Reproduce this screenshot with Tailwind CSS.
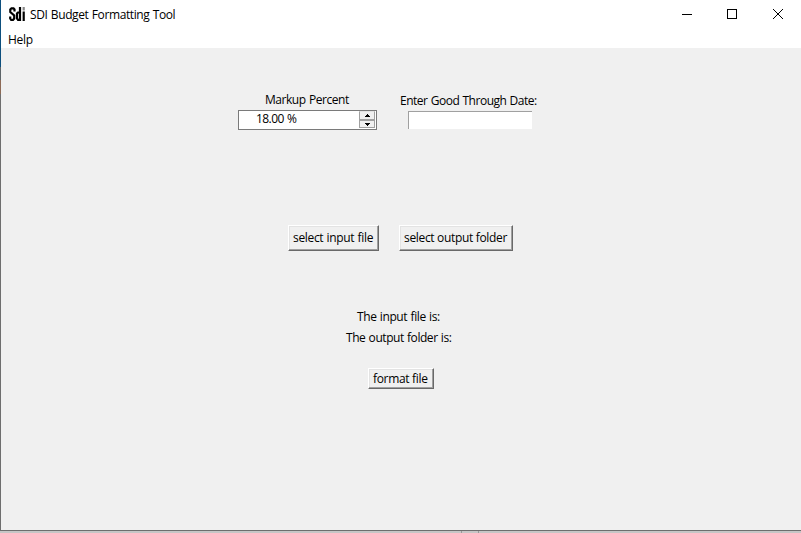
<!DOCTYPE html>
<html lang="en">
<head>
<meta charset="utf-8">
<title>SDI Budget Formatting Tool</title>
<script src="https://cdn.jsdelivr.net/npm/@tailwindcss/browser@4"></script>
</head>
<body class="w-[801px] h-[533px] overflow-hidden flex flex-col bg-[#c8c8c8] text-black text-[12px] leading-[16px] tracking-[-0.45px] [word-spacing:0.6px] whitespace-nowrap font-['Open_Sans','Noto_Sans',sans-serif]">
<div class="flex h-[530px]">
  <div class="w-px shrink-0 flex flex-col">
    <div class="h-[67px] bg-[#0d4f7d]"></div>
    <div class="h-[13px] bg-[#5d6468]"></div>
    <div class="h-[14px] bg-[#8d6a56]"></div>
    <div class="grow bg-[#6e6e6e]"></div>
  </div>
  <div class="w-[800px] flex flex-col bg-[#f0f0f0]">
    <header class="h-[30px] bg-white flex">
      <svg class="ml-[8px] mt-[7px] w-[16px] h-[15px] shrink-0" viewBox="0 0 16 15" fill="none" stroke="#000" stroke-width="2.200">
        <path d="M5.500 4.500V2.500L4.500 1.300H2.500L1.300 2.500V5L5.200 8.500V11.500L4 13H2.200L1.200 11.500V9.500"/>
        <path d="M11 0V14M10.500 5.500H9L8 6.500V11.500L9 12.800H10.500M14.700 4.500V14"/>
        <path d="M14.700 0V3.500" stroke="#888"/>
      </svg>
      <span class="ml-[5px] mt-[7px] w-[634px] tracking-[-0.39px]">SDI Budget Formatting Tool</span>
      <div class="flex">
        <svg class="w-[46px] h-[30px]" viewBox="0 0 46 30" shape-rendering="crispEdges"><path fill="#000" d="M18 14h10v1H18z"/></svg>
        <svg class="w-[46px] h-[30px]" viewBox="0 0 46 30" shape-rendering="crispEdges" fill="none" stroke="#000"><path d="M17.500 9.500h9v9h-9z"/></svg>
        <svg class="w-[45px] h-[30px]" viewBox="0 0 45 30" fill="none" stroke="#000"><path d="M17 9l10 10M27 9l-10 10"/></svg>
      </div>
    </header>
    <nav class="h-[18px] bg-white pl-[7px] pt-[2px] tracking-[-0.3px]"><div>Help</div></nav>
    <main class="grow flex flex-col">
      <div class="flex pt-[44px] pl-[237px]">
        <div class="w-[139px]">
          <div class="pl-[27px] h-[18px]">Markup Percent</div>
          <div class="h-[20px] w-[139px] bg-white border border-[#7a7a7a] flex justify-between">
            <span class="pl-[17px] leading-[16px] tracking-[-0.55px]">18.00 %</span>
            <div class="w-[17px] flex flex-col">
              <div class="w-[16px] h-[9px] bg-[#f0f0f0] border border-t-[#e3e3e3] border-l-[#a0a0a0] border-r-[#a0a0a0] border-b-[#a0a0a0] flex justify-center items-center"><svg class="w-[5px] h-[3px]" viewBox="0 0 5 3" shape-rendering="crispEdges"><path d="M2 0h1v1h1v1h1v1H0V2h1V1h1z"/></svg></div>
              <div class="w-[16px] h-[8px] bg-[#f0f0f0] border border-[#a0a0a0] flex justify-center items-center"><svg class="w-[5px] h-[3px]" viewBox="0 0 5 3" shape-rendering="crispEdges"><path d="M0 0h5v1H4v1H3v1H2V2H1V1H0z"/></svg></div>
            </div>
          </div>
        </div>
        <div class="ml-[23px] pt-px">
          <div class="h-[18px] tracking-[-0.49px]">Enter Good Through Date:</div>
          <div class="ml-[8px] w-[124px] h-[18px] bg-white border-t border-l border-[#a0a0a0]"></div>
        </div>
      </div>
      <div class="mt-[95px] pl-[287px] flex gap-[20px] tracking-[-0.33px]">
        <button class="w-[91px] h-[26px] border-t border-l border-t-white border-l-white border-r border-b border-r-[#696969] border-b-[#696969] shadow-[inset_-1px_-1px_0_#a0a0a0,inset_1px_1px_0_#e3e3e3] pl-[4px] text-left"><span class="block leading-[24px] [word-spacing:0.5px]">select input file</span></button>
        <button class="w-[114px] h-[26px] border-t border-l border-t-white border-l-white border-r border-b border-r-[#696969] border-b-[#696969] shadow-[inset_-1px_-1px_0_#a0a0a0,inset_1px_1px_0_#e3e3e3] pl-[4px] text-left"><span class="block leading-[24px]">select output folder</span></button>
      </div>
      <div class="mt-[58px] pl-[356px] tracking-[-0.4px]">The input file is:</div>
      <div class="mt-[5px] pl-[345px]">The output folder is:</div>
      <div class="mt-[22px] pl-[367px] flex tracking-[-0.33px]">
        <button class="w-[66px] h-[21px] border-t border-l border-t-white border-l-white border-r border-b border-r-[#696969] border-b-[#696969] shadow-[inset_-1px_-1px_0_#a0a0a0,inset_1px_1px_0_#e3e3e3] pl-[4px] text-left"><span class="block leading-[20px]">format file</span></button>
      </div>
    </main>
  </div>
</div>
<div class="h-px shrink-0 bg-[#6e6e6e]"></div>
<div class="h-[2px] shrink-0 flex bg-[#c6c6c6]">
  <div class="ml-[461px] w-px bg-[#999]"></div><div class="ml-[16px] w-px bg-[#999]"></div>
</div>
</body>
</html>
